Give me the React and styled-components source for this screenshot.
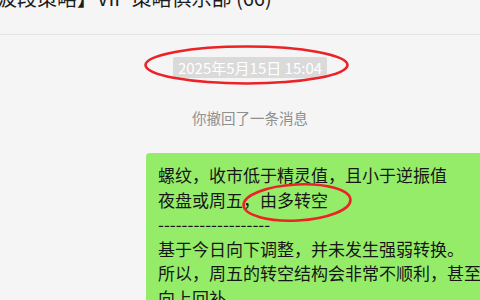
import React from "react";
import styled, { createGlobalStyle } from "styled-components";

const GlobalStyle = createGlobalStyle`
  html, body {
    margin: 0;
    padding: 0;
    background: #f5f5f5;
    overflow: hidden;
  }
  body {
    font-family: "Noto Sans CJK SC", "Noto Sans", sans-serif;
  }
`;

const Window = styled.div`
  position: relative;
  width: 480px;
  height: 300px;
  overflow: hidden;
  background: #f5f5f5;
`;

const Header = styled.div`
  height: 34px;
  border-bottom: 1px solid #e5e5e5;
  overflow: hidden;
`;

const Title = styled.div`
  margin-top: -12px;
  margin-left: -23px;
  font-size: 20px;
  line-height: 20px;
  color: #1b1b1b;
  white-space: nowrap;
`;

const Messages = styled.div`
  display: flex;
  flex-direction: column;
  align-items: center;
  padding-left: 20px;
`;

const TimeBadge = styled.div`
  margin-top: 22px;
  padding: 0 5px;
  height: 21px;
  line-height: 21px;
  font-size: 15px;
  color: #ffffff;
  background: #dadada;
  border-radius: 2px;
  white-space: nowrap;
`;

const Notice = styled.div`
  margin-top: 30px;
  font-size: 14.5px;
  line-height: 20px;
  color: #8f8f8f;
`;

const BubbleRow = styled.div`
  align-self: stretch;
  display: flex;
  margin-top: 25px;
  padding-left: 126px;
`;

const Bubble = styled.div`
  flex-shrink: 0;
  width: 420px;
  padding: 10px 12px;
  background: #95ec69;
  border-radius: 4px;
  font-size: 17px;
  line-height: 24.5px;
  color: #161616;
  white-space: nowrap;
`;

const Mark = styled.svg`
  position: absolute;
  left: ${(p) => p.$x}px;
  top: ${(p) => p.$y}px;
  overflow: visible;
  pointer-events: none;
`;

const Circle = ({ x, y, w, h, rot }) => (
  <Mark $x={x} $y={y} width={w} height={h}>
    <ellipse
      cx={w / 2}
      cy={h / 2}
      rx={w / 2 - 1.5}
      ry={h / 2 - 1.5}
      fill="none"
      stroke="#ec2227"
      strokeWidth="2.6"
      transform={`rotate(${rot} ${w / 2} ${h / 2})`}
    />
  </Mark>
);

const lines = [
  "螺纹，收市低于精灵值，且小于逆振值",
  "夜盘或周五，由多转空",
  "-------------------",
  "基于今日向下调整，并未发生强弱转换。",
  "所以，周五的转空结构会非常不顺利，甚至",
  "向上回补。",
];

export default function App() {
  return (
    <Window>
      <GlobalStyle />
      <Header>
        <Title>【波段策略】VIP 策略俱乐部 (66)</Title>
      </Header>
      <Messages>
        <TimeBadge>2025年5月15日 15:04</TimeBadge>
        <Notice>你撤回了一条消息</Notice>
        <BubbleRow>
          <Bubble>
            {lines.map((l, i) => (
              <div key={i}>{l}</div>
            ))}
          </Bubble>
        </BubbleRow>
      </Messages>
      <Circle x={144} y={45} w={205} h={40} rot={0} />
      <Circle x={242} y={183} w={110} h={39} rot={-3} />
    </Window>
  );
}
